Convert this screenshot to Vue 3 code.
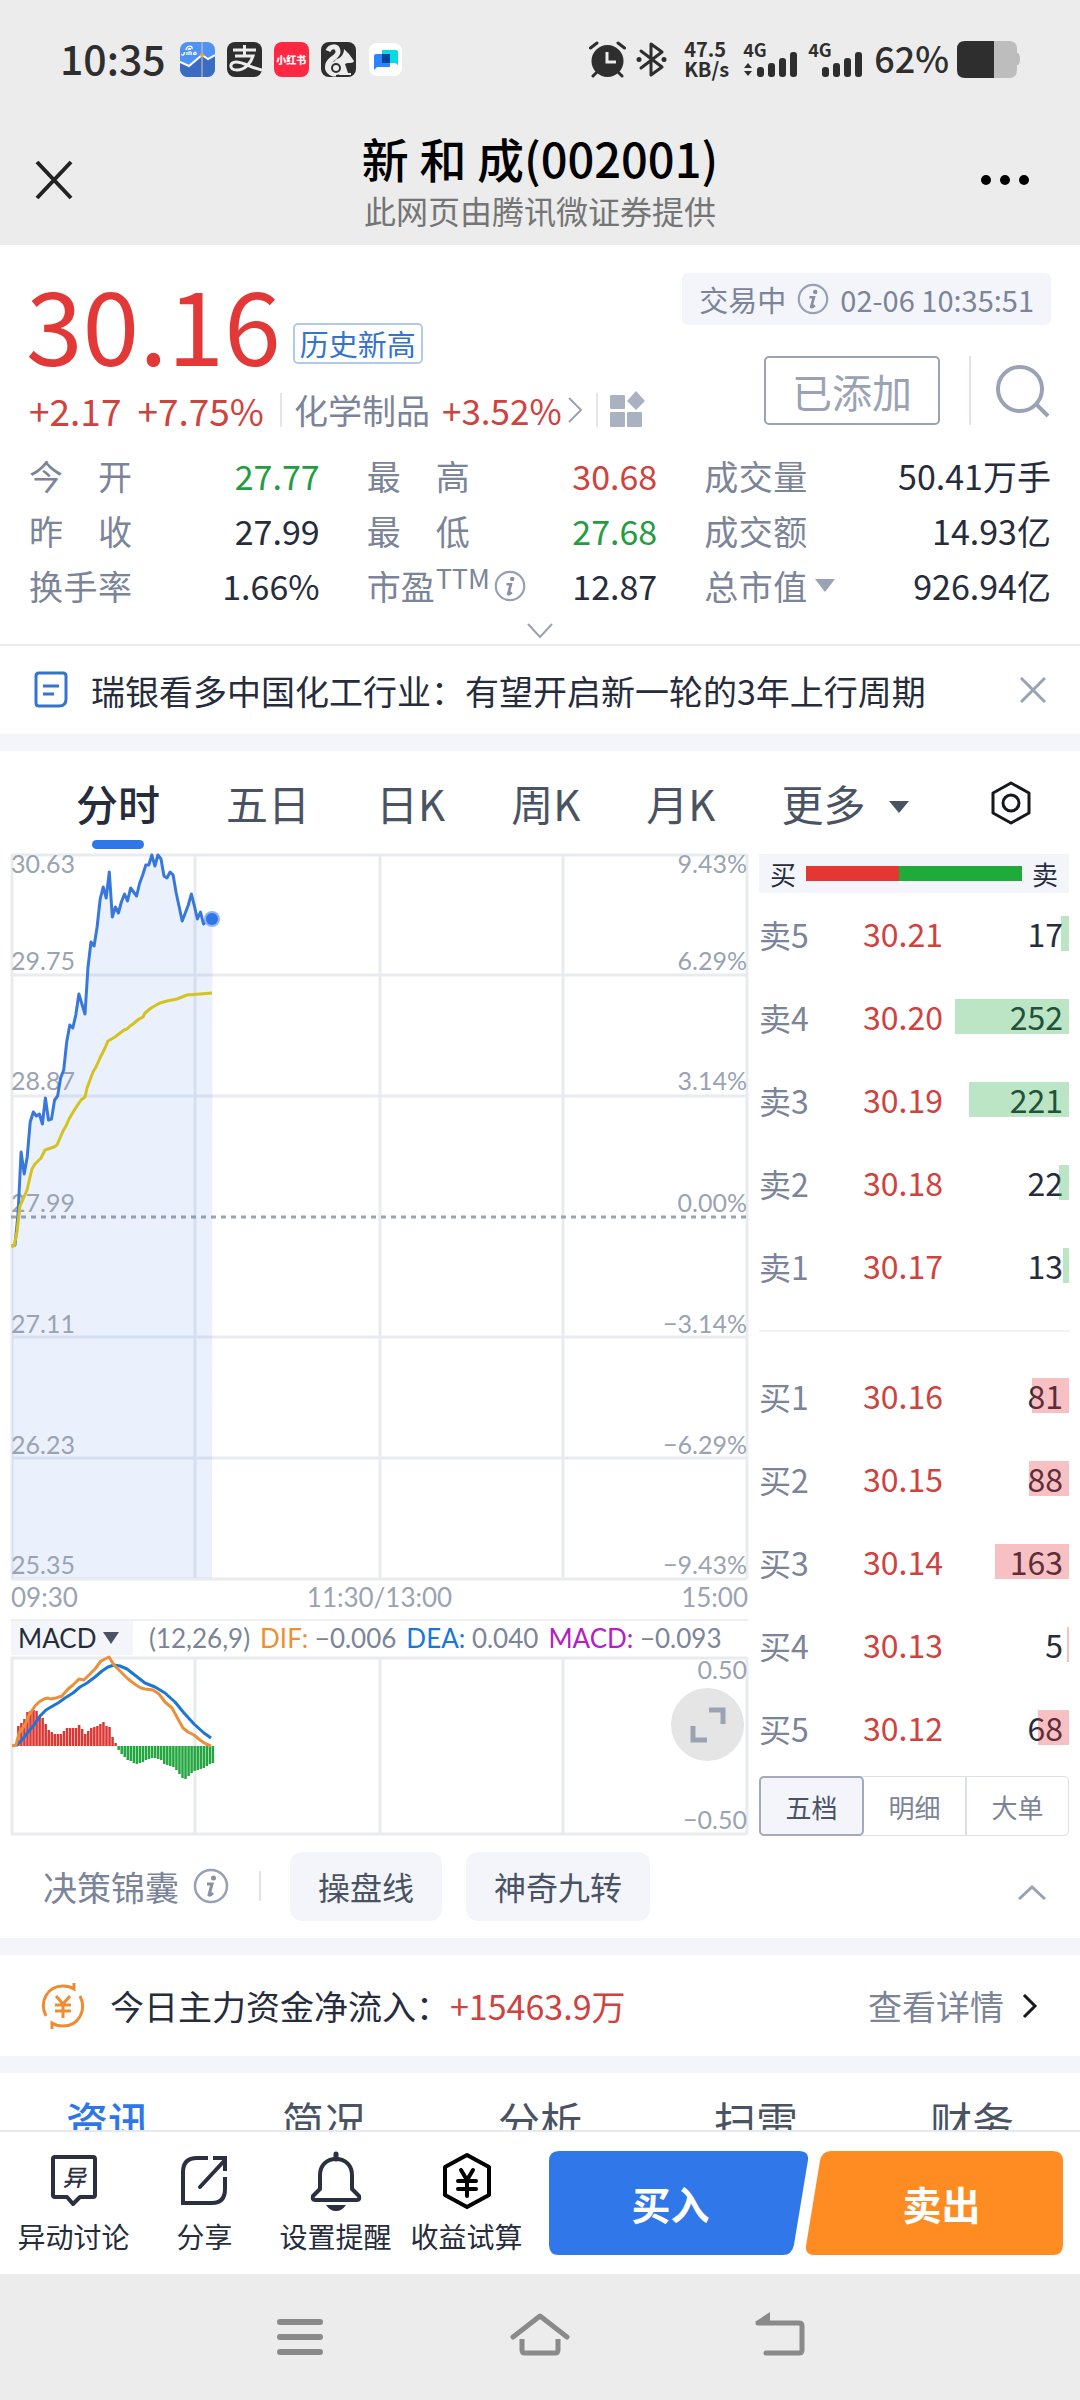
<script setup>
import { ref } from 'vue'

const stats = [
  { label: ['今', '开'], value: '27.77', tone: 'down' },
  { label: ['最', '高'], value: '30.68', tone: 'up' },
  { label: ['成', '交', '量'], value: '50.41万手' },
  { label: ['昨', '收'], value: '27.99' },
  { label: ['最', '低'], value: '27.68', tone: 'down' },
  { label: ['成', '交', '额'], value: '14.93亿' },
  { label: ['换', '手', '率'], value: '1.66%' },
  { label: ['市', '盈'], value: '12.87', kind: 'ttm' },
  { label: ['总', '市', '值'], value: '926.94亿', kind: 'menu' }
]

const periods = ['分时', '五日', '日K', '周K', '月K']
const period = ref('分时')

const sells = [
  { name: '卖5', price: '30.21', qty: 17 },
  { name: '卖4', price: '30.20', qty: 252 },
  { name: '卖3', price: '30.19', qty: 221 },
  { name: '卖2', price: '30.18', qty: 22 },
  { name: '卖1', price: '30.17', qty: 13 }
]
const buys = [
  { name: '买1', price: '30.16', qty: 81 },
  { name: '买2', price: '30.15', qty: 88 },
  { name: '买3', price: '30.14', qty: 163 },
  { name: '买4', price: '30.13', qty: 5 },
  { name: '买5', price: '30.12', qty: 68 }
]
const maxQty = Math.max(...sells.concat(buys).map((r) => r.qty))
const share = (qty) => (qty / maxQty) * 100 + '%'

const bookTabs = ['五档', '明细', '大单']
const bookTab = ref('五档')

// One sample per trading minute, as heights on the plot.
const STEP = 3.04
const priceY = [
  392, 391, 359, 298, 320, 303, 268, 258, 262, 260, 270, 244, 266, 265, 246, 242, 224, 216, 188, 171, 174, 161, 140,
  150, 160, 113, 88, 92, 73, 45, 33, 44, 18, 63, 53, 59, 48, 40, 47, 34, 38, 42, 29, 21, 11, 11, 1, 12, 1, 5, 22, 24,
  18, 21, 39, 53, 67, 59, 51, 40, 52, 65, 58, 70, 66, 66, 65
]
const priceLine = priceY.map((y, i) => `${(1 + i * STEP).toFixed(1)},${y}`).join(' ')
const priceArea = `1,724 ${priceLine} 201,724`
const averageLine =
  '0,392 3,392 6,378 9,352 16,336 19,323 21,315 24,310 30,304 34,296 37,295 43,293 46,291 52,277 55,272 58,265 64,255 70,246 74,243 76,234 82,218 85,213 89,204 94,194 97,187 104,183 113,176 116,175 119,172 122,170 128,165 132,163 134,159 140,154 149,149 156,147 166,145 176,141 189,140 201,139'

const axis = [
  { y: 19, price: '30.63', pct: '9.43%' },
  { y: 116, price: '29.75', pct: '6.29%' },
  { y: 236, price: '28.87', pct: '3.14%' },
  { y: 358, price: '27.99', pct: '0.00%' },
  { y: 479, price: '27.11', pct: '−3.14%' },
  { y: 600, price: '26.23', pct: '−6.29%' },
  { y: 720, price: '25.35', pct: '−9.43%' }
]

const macd = [
  0, 2, 20, 23, 27, 34, 35, 36, 35, 30, 28, 22, 16, 14, 12, 12, 12, 15, 18, 18, 18, 18, 21, 17, 12, 15, 18, 19, 20, 22,
  24, 20, 19, 9, 3, -4, -8, -11, -14, -15, -17, -18, -17, -16, -14, -13, -12, -12, -13, -14, -18, -19, -20, -21, -24,
  -28, -32, -33, -30, -27, -25, -24, -23, -22, -20, -18, -17
]
const difLine =
  '1,89 5,88 8,76 14,68 18,58 24,49 28,45 33,42 37,41 39,42 45,41 51,39 57,32 62,28 68,22 73,23 79,17 84,12 90,4 94,2 98,0 103,8 110,15 117,22 125,28 130,31 134,32 142,33 148,37 154,45 161,51 167,62 172,71 177,75 183,78 189,83 195,87 200,89'
const deaLine =
  '5,89 11,83 17,75 23,68 29,59 35,53 40,50 47,46 54,41 62,36 69,30 76,26 84,20 91,14 97,10 103,8 109,9 116,12 125,19 134,26 144,30 154,36 164,45 173,56 183,67 193,76 200,81'

const infoTabs = ['资讯', '简况', '分析', '扫雷', '财务']
const infoTab = ref('资讯')
</script>

<template>
  <div class="app">
    <header class="chrome">
      <div class="status">
        <span class="clock">10:35</span>
        <span class="notice">
          <svg width="35" height="35" viewBox="0 0 35 35">
            <defs><clipPath id="tile"><rect width="35" height="35" rx="8" /></clipPath></defs>
            <g clip-path="url(#tile)">
              <rect width="35" height="35" fill="#4f92f5" />
              <path d="M0 20 9 24 22 13 28 17 35 13V35H0z" fill="#3a6cc4" />
              <path d="M0 20 9 24 22 13 28 17 35 13" fill="none" stroke="#fff" stroke-width="2" />
              <path d="M22 0V35" stroke="#d8c9ae" stroke-width="1" />
              <circle cx="22" cy="13" r="2" fill="#f2a13c" />
              <path d="M6 8c1-5 7-5 6-1M8 8c1-2 3-2 2 0M3 13c3-3 1-3 1-1s-3 1-2 0M7 10v3M9 13v-3q3-1 2 3M13 12q2-3 3-1t-3 1" fill="none" stroke="#fff" stroke-width="1.3" />
            </g>
          </svg>
          <svg width="35" height="35" viewBox="0 0 35 35">
            <rect width="35" height="35" rx="8" fill="#2e2e2e" />
            <path d="M6 8H29M17.500 3V14M8 14H26C24 21 18 28 10 28 2 28 2 20 9 20 17 20 24 26 35 28" fill="none" stroke="#ececec" stroke-width="3" />
          </svg>
          <span class="red-app">小红书</span>
          <svg width="35" height="35" viewBox="0 0 35 35">
            <rect width="35" height="35" rx="8" fill="#2e2e2e" />
            <path d="M7 9C9 4 16 3 17 9 18 15 9 16 7 22 5 28 9 32 15 32" fill="none" stroke="#ececec" stroke-width="5" />
            <path d="M13 18C18 17 23 14 23 7L28 12 33 19C32 22 27 20 24 22L27 31H30V33H18L20 22z" fill="#ececec" />
            <circle cx="15" cy="26" r="6" fill="#2e2e2e" stroke="#ececec" stroke-width="2" />
            <circle cx="15" cy="26" r="3" fill="#ececec" />
          </svg>
          <svg width="35" height="35" viewBox="0 0 35 35">
            <rect x="1" y="1" width="33" height="33" rx="8" fill="#fff" />
            <path d="M14 8h14q2 0 2 2v13l-3-2H14z" fill="#05dbe0" />
            <path d="M8 12h14v13H9l-3 3V14q0-2 2-2z" fill="#2a86ff" />
            <path d="M14 12h8v9h-8z" fill="#04439c" />
          </svg>
        </span>
        <span class="system">
          <svg width="37" height="37" viewBox="0 0 37 37">
            <circle cx="18.500" cy="20" r="16" fill="#2e2e2e" />
            <path d="M1.500 7 8 2M35.500 7 29 2M8 31 4 35M29 31 33 35" stroke="#2e2e2e" stroke-width="3" stroke-linecap="round" />
            <path d="M18 11V21H27" fill="none" stroke="#ececec" stroke-width="3" />
          </svg>
          <svg class="bt" width="31" height="37" viewBox="0 0 31 37">
            <path d="M5 10 26 26 15 34V3L26 11 5 27" fill="none" stroke="#2e2e2e" stroke-width="3" stroke-linejoin="round" stroke-linecap="round" />
            <circle cx="3" cy="18.500" r="2.500" fill="#2e2e2e" /><circle cx="28" cy="18.500" r="2.500" fill="#2e2e2e" />
          </svg>
          <span class="rate"><b>47.5</b><b>KB/s</b></span>
          <span v-for="n in 2" :key="n" class="signal">
            <b>4G</b>
            <svg width="56" height="25" viewBox="0 0 56 25">
              <path v-if="n === 1" d="M1 16h8L5 11zM1 19h8l-4 5z" fill="#2e2e2e" />
              <g fill="#2e2e2e">
                <rect x="14" y="15" width="7" height="10" rx="3" /><rect x="25" y="11" width="7" height="14" rx="3" />
                <rect x="36" y="6" width="7" height="19" rx="3" /><rect x="47" y="0" width="7" height="25" rx="3" />
              </g>
            </svg>
          </span>
          <span class="percent">62%</span>
          <svg width="63" height="37" viewBox="0 0 63 37">
            <path d="M36 0h16q8 0 8 8v4h1q2 1 2 6t-2 6h-1v5q0 8-8 8H36z" fill="#bdbdbd" />
            <path d="M37 0V37H8q-8 0-8-8V8q0-8 8-8z" fill="#2e2e2e" />
          </svg>
        </span>
      </div>
      <div class="titlebar">
        <button class="icon-btn" aria-label="关闭">
          <svg width="40" height="40" viewBox="0 0 40 40"><path d="M3 2 37 38M37 2 3 38" stroke="#222" stroke-width="4" /></svg>
        </button>
        <div class="titles">
          <h1>新 和 成(002001)</h1>
          <p>此网页由腾讯微证券提供</p>
        </div>
        <button class="icon-btn dots" aria-label="更多">
          <svg width="50" height="12" viewBox="0 0 50 12">
            <circle cx="6" cy="6" r="5" /><circle cx="25" cy="6" r="5" /><circle cx="44" cy="6" r="5" />
          </svg>
        </button>
      </div>
    </header>

    <main class="scroll">
      <section class="quote">
        <div class="quote-top">
          <div>
            <div class="price-row"><span class="price">30.16</span><span class="tag">历史新高</span></div>
            <div class="change-row">
              <span class="delta">+2.17</span><span class="delta">+7.75%</span>
              <i class="rule"></i>
              <a href="#sector" class="sector">化学制品<span>+3.52%</span>
                <svg width="17" height="28" viewBox="0 0 17 28"><path d="M2 2 14 14 2 26" fill="none" stroke="#9aa3b5" stroke-width="2" /></svg>
              </a>
              <i class="rule"></i>
              <button class="icon-btn" aria-label="组件">
                <svg width="38" height="38" viewBox="0 0 38 38" fill="#aab2c2">
                  <rect x="0" y="4" width="15" height="14" rx="1" /><rect x="0" y="21" width="15" height="15" rx="1" />
                  <rect x="17" y="21" width="15" height="15" rx="1" /><path d="M26 0 35 10 26 19 17 10z" />
                </svg>
              </button>
            </div>
          </div>
          <div class="quote-side">
            <div class="session">
              <span>交易中</span>
              <svg width="32" height="32" viewBox="0 0 36 36"><circle cx="18" cy="18" r="16" fill="none" stroke="#97a0b4" stroke-width="2.500" /><circle cx="20.500" cy="10" r="2.500" fill="#8790a4" /><path d="M14 16h5l-3 11q1 1 4-2" fill="none" stroke="#8790a4" stroke-width="3" /></svg>
              <time>02-06 10:35:51</time>
            </div>
            <div class="actions">
              <button class="added">已添加</button>
              <i></i>
              <button class="icon-btn" aria-label="搜索">
                <svg width="55" height="56" viewBox="1 0 55 56"><circle cx="25" cy="26" r="22" fill="none" stroke="#9aa3b5" stroke-width="4" /><path d="M42 42 53 53" stroke="#9aa3b5" stroke-width="4" /></svg>
              </button>
            </div>
          </div>
        </div>

        <dl class="stats">
          <div v-for="s in stats" :key="s.value" class="stat">
            <dt>
              <span class="name" :class="{ wide: s.kind !== 'ttm' }"><span v-for="c in s.label" :key="c">{{ c }}</span></span>
              <template v-if="s.kind === 'ttm'">
                <sup>TTM</sup>
                <svg width="32" height="32" viewBox="0 0 36 36"><circle cx="18" cy="18" r="16" fill="none" stroke="#97a0b4" stroke-width="2.500" /><circle cx="20.500" cy="10" r="2.500" fill="#8790a4" /><path d="M14 16h5l-3 11q1 1 4-2" fill="none" stroke="#8790a4" stroke-width="3" /></svg>
              </template>
              <svg v-if="s.kind === 'menu'" class="drop" width="20" height="13" viewBox="0 0 20 13"><path d="M0 0H20L10 13z" fill="#9aa3b5" /></svg>
            </dt>
            <dd :class="s.tone">{{ s.value }}</dd>
          </div>
        </dl>
        <button class="expand" aria-label="展开">
          <svg width="26" height="16" viewBox="0 0 26 16"><path d="M1 1 13 14 25 1" fill="none" stroke="#9aa3b5" stroke-width="2" /></svg>
        </button>
      </section>

      <section class="news">
        <svg width="34" height="38" viewBox="0 0 34 38"><path d="M5 2H29Q32 2 32 5V28Q32 35 25 35H5Q2 35 2 32V5Q2 2 5 2z" fill="none" stroke="#3473cf" stroke-width="3" /><path d="M9 15H25M9 23H20" stroke="#3473cf" stroke-width="3" /></svg>
        <a href="#news">瑞银看多中国化工行业：有望开启新一轮的3年上行周期</a>
        <button class="icon-btn" aria-label="关闭提示">
          <svg width="26" height="26" viewBox="0 0 26 26"><path d="M1 1 25 25M25 1 1 25" stroke="#9aa3b5" stroke-width="3" /></svg>
        </button>
      </section>

      <nav class="periods">
        <button v-for="p in periods" :key="p" :class="{ on: p === period }" @click="period = p">{{ p }}</button>
        <button>更多<svg class="more" width="20" height="12" viewBox="0 0 20 12"><path d="M0 0H20L10 12z" fill="#4a5363" /></svg></button>
        <button class="gear" aria-label="设置">
          <svg width="42" height="44" viewBox="0 0 42 44" fill="none" stroke="#16181d" stroke-width="3"><path d="M21 2 39 12V32L21 42 3 32V12z" stroke-linejoin="round" /><circle cx="21" cy="22" r="8" /></svg>
        </button>
      </nav>

      <section class="market">
        <div class="charts">
          <svg class="plot" viewBox="0 0 737 726">
            <g class="grid">
              <path d="M1 1H736M0 121H736M0 242H736M0 483H736M0 604H736M0 725H736" />
              <path d="M1 0V725M184 0V725M369 0V725M552 0V725M736 0V725" />
            </g>
            <path d="M0 363H736" class="zero" />
            <polygon :points="priceArea" class="area" />
            <g v-for="a in axis" :key="a.y" class="label">
              <text x="0" :y="a.y">{{ a.price }}</text>
              <text x="736" :y="a.y" text-anchor="end">{{ a.pct }}</text>
            </g>
            <polyline :points="priceLine" class="line blue" />
            <polyline :points="averageLine" class="line gold" />
            <circle cx="201" cy="65" r="8" fill="#8fb5f3" /><circle cx="201" cy="65" r="6" fill="#3075e9" />
          </svg>
          <div class="hours"><span>09:30</span><span>11:30/13:00</span><span>15:00</span></div>
          <div class="indicator">
            <button>MACD<svg width="16" height="12" viewBox="0 0 16 12"><path d="M0 0H16L8 12z" fill="#4a5363" /></svg></button>
            <span class="params">(12,26,9)</span>
            <span><b class="dif">DIF:</b> −0.006</span>
            <span><b class="dea">DEA:</b> 0.040</span>
            <span><b class="bar">MACD:</b> −0.093</span>
          </div>
          <div class="sub">
            <svg class="plot" viewBox="0 0 737 178">
              <path class="grid" d="M0 1H736M0 177H736M1 0V177M184 0V177M369 0V177M552 0V177M736 0V177" />
              <rect
                v-for="(m, i) in macd" :key="i" :x="i * STEP" :y="m > 0 ? 89 - m : 89" width="2.500" :height="Math.abs(m)"
                :fill="m > 0 ? '#dc3733' : '#22a63f'"
              />
              <polyline :points="deaLine" class="line dea" />
              <polyline :points="difLine" class="line dif" />
              <g class="label">
                <text x="736" y="22" text-anchor="end">0.50</text>
                <text x="736" y="172" text-anchor="end">−0.50</text>
              </g>
            </svg>
            <button class="full" aria-label="全屏">
              <svg width="38" height="38" viewBox="0 0 38 38" fill="none" stroke="#9aa3b5" stroke-width="5"><path d="M20 4H34V18M4 20V34H18" /></svg>
            </button>
          </div>
        </div>

        <aside class="book">
          <div class="ratio"><span>买</span><i><b></b></i><span>卖</span></div>
          <table class="sell">
            <tbody>
              <tr v-for="r in sells" :key="r.name">
                <th scope="row">{{ r.name }}</th><td class="quote-price">{{ r.price }}</td>
                <td class="qty">{{ r.qty }}<i :style="{ width: share(r.qty) }"></i></td>
              </tr>
            </tbody>
          </table>
          <hr />
          <table class="buy">
            <tbody>
              <tr v-for="r in buys" :key="r.name">
                <th scope="row">{{ r.name }}</th><td class="quote-price">{{ r.price }}</td>
                <td class="qty">{{ r.qty }}<i :style="{ width: share(r.qty) }"></i></td>
              </tr>
            </tbody>
          </table>
          <div class="book-tabs">
            <button v-for="t in bookTabs" :key="t" :class="{ on: t === bookTab }" @click="bookTab = t">{{ t }}</button>
          </div>
        </aside>
      </section>

      <section class="tools">
        <span>决策锦囊</span>
        <svg width="36" height="36" viewBox="0 0 36 36"><circle cx="18" cy="18" r="16" fill="none" stroke="#97a0b4" stroke-width="2.500" /><circle cx="20.500" cy="10" r="2.500" fill="#8790a4" /><path d="M14 16h5l-3 11q1 1 4-2" fill="none" stroke="#8790a4" stroke-width="3" /></svg>
        <i></i>
        <button class="chip">操盘线</button>
        <button class="chip">神奇九转</button>
        <button class="icon-btn collapse" aria-label="收起">
          <svg width="28" height="15" viewBox="0 0 28 15"><path d="M1 14 14 2 27 14" fill="none" stroke="#9aa3b5" stroke-width="3" /></svg>
        </button>
      </section>

      <section class="flow">
        <svg width="44" height="48" viewBox="0 0 44 48" fill="none" stroke="#ee8c33" stroke-width="3">
          <path d="M5 34C-2 20 6 4 22 4 26 4 30 5 33 7V1M39 14C46 28 38 44 22 44 18 44 14 43 11 41V47" />
          <path d="M15 14 22 22 29 14M14 23H30M14 29H30M22 22V36" />
        </svg>
        <span>今日主力资金净流入：<em>+15463.9万</em></span>
        <a href="#flow">查看详情<svg width="16" height="28" viewBox="0 0 16 28"><path d="M2 3 13 14 2 25" fill="none" stroke="#16181d" stroke-width="3" /></svg></a>
      </section>

      <nav class="info-tabs">
        <button v-for="t in infoTabs" :key="t" :class="{ on: t === infoTab }" @click="infoTab = t">{{ t }}</button>
      </nav>
    </main>

    <footer class="dock">
      <button class="dock-item">
        <svg width="60" height="60" viewBox="0 0 60 60" fill="none" stroke="#2a3040" stroke-width="4">
          <path d="M11 6H49Q51 6 51 8V44Q51 46 49 46H36L29 53 23 46H11Q9 46 9 44V8Q9 6 11 6z" stroke-linejoin="round" />
          <text x="30" y="35" text-anchor="middle" font-size="23" font-weight="500" font-style="italic" fill="#2a3040" stroke="none">异</text>
        </svg>异动讨论
      </button>
      <button class="dock-item">
        <svg width="60" height="60" viewBox="0 0 60 60" fill="none" stroke="#2a3040" stroke-width="4">
          <path d="M33 7H22Q8 7 8 21V52H37Q50 52 50 38V26" /><path d="M25 36 50 9" stroke-linecap="round" /><path d="M38 7H50V20" />
        </svg>分享
      </button>
      <button class="dock-item">
        <svg width="60" height="60" viewBox="0 0 60 60" fill="none" stroke="#2a3040" stroke-width="4">
          <path d="M30 8C20 8 14 15 14 24V38L7 45Q6 49 9 49H51Q54 49 53 45L46 38V24C46 15 40 8 30 8z" stroke-linejoin="round" />
          <path d="M30 3V8" stroke-width="5" stroke-linecap="round" /><path d="M20 54H40Q36 60 30 60T20 54z" fill="#2a3040" stroke="none" />
        </svg>设置提醒
      </button>
      <button class="dock-item">
        <svg width="60" height="60" viewBox="0 0 60 60" fill="none" stroke="#000" stroke-width="4">
          <path d="M30 4 52 16V44L30 56 8 44V16z" stroke-linejoin="round" />
          <path d="M24 19 30 29 36 19M21 30H39M21 38H39M30 29V45" stroke-linecap="round" />
        </svg>收益试算
      </button>
      <div class="trade">
        <button class="deal buy-in">
          <svg viewBox="0 0 258 104" preserveAspectRatio="none"><path d="M10 0H249Q259 0 258 9L244 94Q242 104 233 104H10Q0 104 0 94V10Q0 0 10 0z" fill="#3078e9" /></svg>
          <span>买入</span>
        </button>
        <button class="deal sell-out">
          <svg viewBox="0 0 258 104" preserveAspectRatio="none"><path d="M25 0H248Q258 0 258 10V94Q258 104 248 104H9Q-1 104 0 95L14 10Q16 0 25 0z" fill="#ff8c22" /></svg>
          <span>卖出</span>
        </button>
      </div>
    </footer>

    <nav class="system-nav">
      <button class="icon-btn" aria-label="最近任务"><svg width="60" height="50" viewBox="0 0 60 50"><path d="M10 10H50M10 25H50M10 40H50" stroke="#8a8a8a" stroke-width="6" stroke-linecap="round" /></svg></button>
      <button class="icon-btn" aria-label="主屏幕"><svg width="60" height="50" viewBox="0 0 60 50" fill="none" stroke="#8a8a8a" stroke-width="5"><path d="M3 25 30 4 57 25" stroke-linecap="round" stroke-linejoin="round" /><path d="M12 27V38Q12 41 15 41H45Q48 41 48 38V27" /></svg></button>
      <button class="icon-btn" aria-label="返回"><svg width="60" height="50" viewBox="0 0 60 50" fill="none" stroke="#8a8a8a" stroke-width="5"><path d="M8 11H49Q52 11 52 14V38Q52 41 49 41H16" stroke-linecap="round" /><path d="M5 10 20 0V10z" fill="#8a8a8a" stroke="none" /></svg></button>
    </nav>
  </div>
</template>

<style>
body { margin: 0; background: #fff; }
</style>

<style scoped>
.app {
  height: 100vh;
  display: flex;
  flex-direction: column;
  overflow: hidden;
  background: #fff;
  color: #262c3b;
  font-family: "Noto Sans CJK SC", "Noto Sans", sans-serif;
  font-size: 34px;
}
* { box-sizing: border-box; }
svg { display: block; flex: none; }
i, em { font-style: normal; }
h1, p, dl, dd { margin: 0; }
a { color: inherit; text-decoration: none; }
button { padding: 0; border: 0; background: none; color: inherit; font: inherit; cursor: pointer; }
.icon-btn { display: flex; align-items: center; flex: none; }
.up { color: #d0423e; }
.down { color: #249c41; }

/* phone and page header */
.chrome { background: #ececec; flex: none; }
.status { height: 118px; padding: 0 60px; display: flex; align-items: center; color: #2e2e2e; font-weight: 500; }
.clock { font-size: 41px; line-height: 48px; padding-bottom: 4px; }
.notice { display: flex; gap: 12px; margin-left: 14px; }
.red-app { width: 35px; height: 35px; border-radius: 8px; background: #ff2742; color: #fff; font-size: 10px; font-weight: 900; line-height: 35px; text-align: center; }
.system { display: flex; align-items: center; margin-left: auto; }
.bt { margin: 0 17px 0 10px; }
.rate { display: flex; flex-direction: column; width: 43px; font-size: 20px; line-height: 20px; }
.signal { display: flex; flex-direction: column; margin-left: 16px; width: 56px; font-size: 18px; line-height: 18px; }
.signal + .signal { margin-left: 9px; }
.signal svg { margin-top: -6px; }
.signal b { margin-top: -2px; }
.percent { font-size: 36px; line-height: 48px; margin: 0 8px 0 10px; padding-bottom: 4px; }
.titlebar { display: grid; grid-template-columns: 1fr auto 1fr; align-items: center; height: 127px; padding: 0 34px 4px; }
.dots { justify-self: end; padding-right: 16px; }
.titles { text-align: center; }
h1 { font-size: 47px; font-weight: 500; line-height: 58px; color: #000; }
.titles p { margin-top: 2px; font-size: 32px; line-height: 42px; color: #757575; }

.scroll { flex: 1; min-height: 0; overflow: hidden; }

/* quote */
.quote { padding: 22px 29px 0; border-bottom: 2px solid #e8eaee; }
.quote-top { display: flex; justify-content: space-between; }
.price-row { display: flex; align-items: flex-end; gap: 12px; margin-left: -3px; }
.price { font-size: 102px; line-height: 110px; color: #e23838; }
.tag { margin-bottom: 13px; padding: 0 5px; border: 2px solid #b0caec; border-radius: 5px; font-size: 29px; line-height: 37px; color: #3473cf; }
.change-row { display: flex; align-items: center; margin-top: 11px; line-height: 44px; }
.delta { font-size: 37px; color: #d0423e; margin-right: 16px; }
.rule { width: 2px; height: 34px; background: #e3e5ea; margin-right: 12px; }
.sector { display: flex; align-items: center; color: #7b8498; margin-right: 12px; }
.sector span { margin: 0 5px 0 12px; font-size: 35px; color: #d0423e; }
.quote-side { display: flex; flex-direction: column; align-items: flex-end; padding-top: 6px; }
.session { display: flex; align-items: center; gap: 11px; padding: 0 17px; border-radius: 6px; background: #f3f5fa; font-size: 29px; line-height: 52px; color: #7b8498; }
.actions { display: flex; align-items: center; margin-top: 31px; color: #9aa3b5; }
.added { width: 176px; height: 69px; border: 2px solid #9aa3b5; border-radius: 5px; font-size: 40px; line-height: 60px; }
.actions i { width: 2px; height: 69px; margin: 0 25px 0 29px; background: #e0e3e9; }
.stats { display: grid; grid-template-columns: 290fr 290fr 346fr; column-gap: 47px; grid-auto-rows: 55px; margin-top: 16px; }
.stat { display: flex; align-items: center; justify-content: space-between; line-height: 55px; }
.stat dt { display: flex; align-items: center; color: #7b8498; }
.name { display: flex; justify-content: space-between; }
.name.wide { width: 103px; }
sup { align-self: flex-start; font-size: 27px; line-height: 40px; margin: 0 4px 0 1px; vertical-align: baseline; }
.drop { margin-left: 8px; }
.expand { display: flex; width: 100%; height: 31px; align-items: center; justify-content: center; padding-top: 4px; }

.news { height: 88px; padding: 0 34px; display: flex; align-items: center; }
.news a { flex: 1; margin-left: 23px; white-space: nowrap; }

/* period tabs */
.periods { display: flex; gap: 66px; height: 120px; padding: 0 48px 0 76px; border-top: 17px solid #f3f5fa; font-size: 42px; color: #4a5363; }
.periods button { position: relative; display: flex; align-items: center; flex: none; }
.periods .on { font-weight: 500; color: #262c3b; }
.periods .on::after { content: ""; position: absolute; left: 50%; bottom: 5px; width: 52px; height: 9px; margin-left: -26px; border-radius: 5px; background: #2f77e8; }
.more { margin: 8px 0 0 24px; }
.periods .gear { margin-left: auto; }

/* charts */
.market { display: flex; gap: 11px; padding: 0 11px 2px; }
.charts { flex: 1; min-width: 0; font-family: Lato, "Noto Sans", sans-serif; font-size: 26px; color: #7b8498; }
.plot { width: 100%; height: auto; overflow: visible; }
.grid { fill: none; stroke: #e9ebf0; stroke-width: 3; }
.zero { fill: none; stroke: #9aa3b5; stroke-width: 3; stroke-dasharray: 5 5; }
.label { fill: #9aa3b3; font-size: 25px; }
.area { fill: #3277e8; fill-opacity: 0.1; }
.line { fill: none; stroke-width: 3; stroke-linejoin: round; }
.blue { stroke: #3878da; }
.gold { stroke: #d4c21f; }
.line.dif { stroke: #eb903a; }
.line.dea { stroke: #1b76d6; }
.hours { display: flex; justify-content: space-between; height: 39px; line-height: 34px; color: #9aa3b3; }
.indicator { display: flex; align-items: center; height: 38px; border-top: 2px solid #edeff3; line-height: 34px; padding-bottom: 2px; white-space: nowrap; }
.indicator button { display: flex; align-items: center; gap: 7px; width: 122px; height: 34px; padding-left: 7px; background: #f3f5fa; color: #262c3b; }
.indicator span { margin-left: 10px; }
.indicator .params { margin-left: 16px; }
.indicator b { font-weight: 400; }
.indicator .dif { color: #ef8f33; }
.indicator .dea { color: #1b76d6; }
.indicator .bar { color: #b320c8; }
.sub { position: relative; }
.full { position: absolute; top: 31px; right: 4px; display: flex; align-items: center; justify-content: center; width: 73px; height: 73px; border-radius: 50%; background: #e5e5e5; }

/* order book */
.book { flex: none; width: 310px; font-size: 32px; }
.ratio { display: flex; align-items: center; gap: 10px; height: 39px; padding: 0 11px; background: #f3f5fa; font-size: 26px; line-height: 38px; }
.ratio i { flex: 1; height: 15px; background: #1faa3c; }
.ratio b { display: block; width: 43%; height: 15px; background: #e43633; }
.book table { width: 100%; border-spacing: 0; table-layout: fixed; }
.book th { width: 104px; padding: 0 0 2px; font-weight: 400; text-align: left; color: #7b8498; }
.book td { padding: 0 0 2px; height: 83px; line-height: 33px; }
.quote-price { color: #d0423e; }
.book .qty { position: relative; width: 114px; padding-right: 6px; text-align: right; }
.qty i { position: absolute; right: 0; top: 23px; height: 35px; background: rgba(31, 170, 60, 0.3); }
.buy .qty i { background: rgba(228, 51, 56, 0.3); }
.book hr { height: 2px; margin: 22px 0 23px; border: 0; background: #f2f3f6; }
.book-tabs { display: flex; height: 60px; margin-top: 6px; border: 1px solid #dcdfe6; border-radius: 5px; font-size: 26px; color: #7b8498; }
.book-tabs button { flex: 1; }
.book-tabs button + button + button { border-left: 2px solid #dcdfe6; }
.book-tabs .on { margin: -1px 0 -1px -1px; border: 2px solid #a3abba; border-radius: 5px; background: #f3f5fa; color: #4a5363; }

/* tools */
.tools { display: flex; align-items: center; height: 96px; margin-bottom: 4px; padding: 0 34px 0 43px; color: #7b8498; }
.tools > svg { margin-left: 14px; }
.tools i { width: 2px; height: 30px; margin: 0 29px 0 30px; background: #e0e3e9; }
.chip { height: 69px; margin-right: 24px; padding: 0 28px; border-radius: 12px; background: #f3f5fa; font-size: 32px; line-height: 60px; color: #4a5363; }
.collapse { margin: 12px 0 0 auto; }

.flow { display: flex; align-items: center; height: 135px; padding: 0 42px 0 41px; border: solid #f3f5fa; border-width: 17px 0; }
.flow span { margin-left: 25px; }
.flow em { color: #d0423e; }
.flow a { display: flex; align-items: center; gap: 18px; margin-left: auto; color: #7b8498; }

.info-tabs { display: flex; font-size: 42px; line-height: 60px; color: #4a5363; }
.info-tabs button { flex: 1; padding: 17px 0; }
.info-tabs .on { color: #2f77e8; font-weight: 500; }

/* bottom bars */
.dock { display: flex; align-items: flex-start; flex: none; height: 144px; padding: 19px 17px 0 8px; border-top: 2px solid #e8e9ee; background: #fff; }
.dock-item { display: flex; flex-direction: column; align-items: center; flex: none; width: 131px; font-size: 28px; line-height: 50px; white-space: nowrap; }
.trade { display: flex; flex: 1; margin-left: 17px; }
.deal { position: relative; flex: 1; height: 104px; color: #fff; font-size: 39px; font-weight: 700; }
.buy-in { padding-right: 16px; }
.sell-out { padding-left: 14px; margin-left: -2px; }
.deal svg { position: absolute; inset: 0; width: 100%; height: 100%; }
.deal span { position: relative; }
.system-nav { display: flex; flex: none; justify-content: center; gap: 180px; height: 126px; align-items: center; background: #ececec; }
</style>
